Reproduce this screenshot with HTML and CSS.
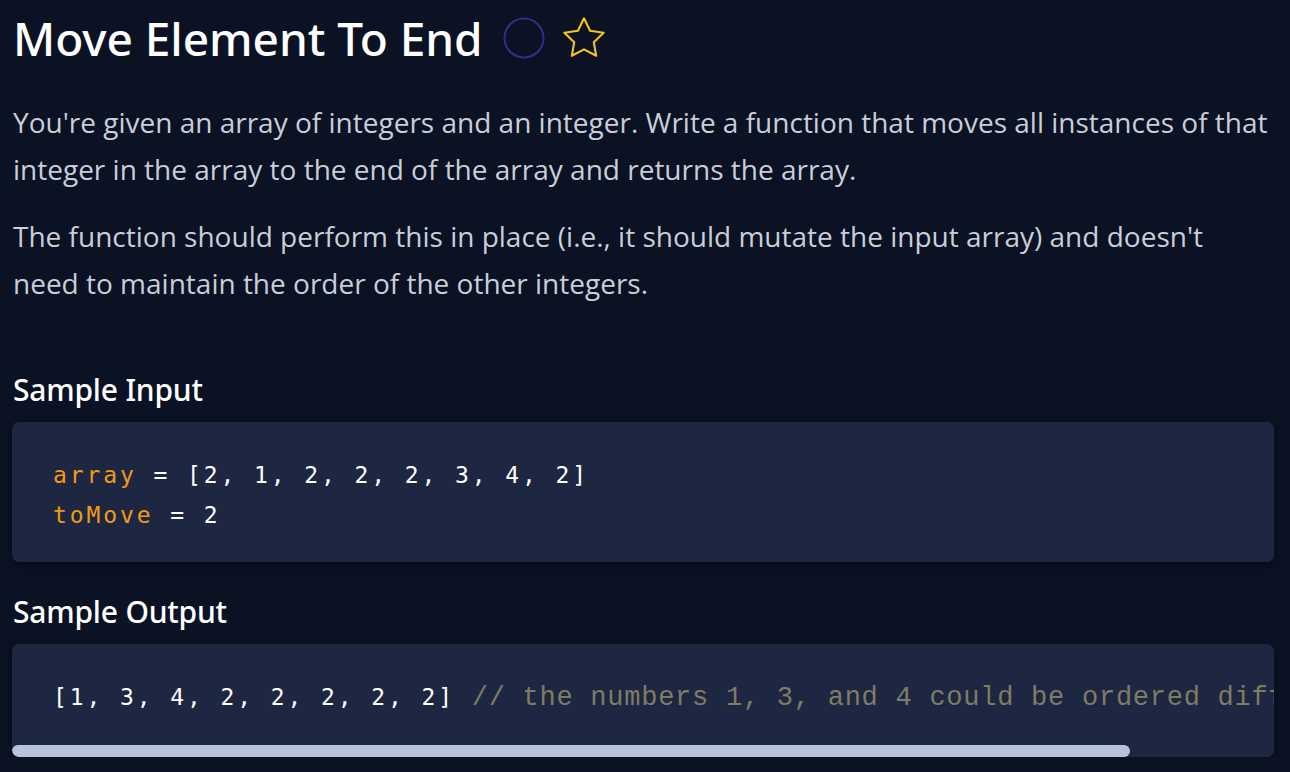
FILE: index.html
```html
<!DOCTYPE html>
<html lang="en">
<head>
<meta charset="utf-8">
<title>Move Element To End</title>
<link rel="stylesheet" href="styles.css">
</head>
<body>
<main class="prompt">
  <header class="title-row">
    <h1 class="title">Move Element To End</h1>
    <svg class="status-icon" width="42" height="42" viewBox="0 0 42 42" aria-hidden="true">
      <circle cx="21" cy="21" r="19.5" fill="none" stroke="#342e86" stroke-width="2"/>
    </svg>
    <svg class="star-icon" width="42" height="42" viewBox="2.5 2.2 19 19" aria-hidden="true">
      <path d="M12 2.8l2.75 5.6 6.15.9-4.45 4.33 1.05 6.12L12 16.87l-5.5 2.88 1.05-6.12L3.1 9.3l6.15-.9z" fill="none" stroke="#f6c21c" stroke-width="0.95" stroke-linejoin="round"/>
    </svg>
  </header>
  <p class="text">You're given an array of integers and an integer. Write a function that moves all instances of that integer in the array to the end of the array and returns the array.</p>
  <p class="text">The function should perform this in place (i.e., it should mutate the input array) and doesn't need to maintain the order of the other integers.</p>

  <h3 class="section-title section-title--first">Sample Input</h3>
  <pre class="code-block"><code><span class="var">array</span> = [2, 1, 2, 2, 2, 3, 4, 2]
<span class="var">toMove</span> = 2</code></pre>

  <h3 class="section-title">Sample Output</h3>
  <div class="code-block code-block--scroll">
    <pre class="code-line"><code>[1, 3, 4, 2, 2, 2, 2, 2] <span class="comment">// the numbers 1, 3, and 4 could be ordered differently</span></code></pre>
    <div class="scrollbar"><div class="scrollbar-thumb"></div></div>
  </div>
</main>
</body>
</html>
```
FILE: styles.css
```css
html, body {
  margin: 0;
  background: #0a1224;
}
body {
  padding: 0 16px 0 12px;
  font-family: "Open Sans", "Noto Sans", sans-serif;
  color: #c9ced8;
}
.prompt {
  display: flex;
  flex-direction: column;
}
.title-row {
  display: flex;
  align-items: center;
  gap: 0;
  height: 76px;
  padding-left: 1px;
}
.title {
  margin: 0;
  font-family: "Noto Sans", "Open Sans", sans-serif;
  font-weight: 500;
  font-size: 46px;
  line-height: 1;
  color: #ffffff;
  letter-spacing: -0.05px;
}
.status-icon {
  margin-left: 20px;
}
.star-icon {
  margin-left: 18px;
}
.text {
  margin: 23px 0 0 1px;
  font-size: 28px;
  line-height: 47px;
  color: #c9ced8;
}
.text + .text {
  margin-top: 20px;
}
.section-title {
  margin: 30px 0 0 1px;
  font-family: "Noto Sans", "Open Sans", sans-serif;
  font-weight: 500;
  font-size: 30px;
  line-height: 40px;
  color: #ffffff;
  letter-spacing: -0.2px;
}
.section-title--first {
  margin-top: 63px;
}
.code-block {
  margin: 12px 0 0 0;
  padding: 33px 41px 27px;
  background: #1d2742;
  border-radius: 7px;
  box-shadow: 0 3px 8px rgba(0, 0, 0, 0.45);
  font-family: "DejaVu Sans Mono", monospace;
  font-size: 23px;
  line-height: 40px;
  letter-spacing: 2.9px;
  color: #ffffff;
  white-space: pre;
}
.code-block code {
  font-family: inherit;
}
.var {
  color: #f39a12;
}
.code-block--scroll {
  padding: 0;
  overflow: hidden;
  display: flex;
  flex-direction: column;
}
.code-line {
  margin: 0;
  padding: 33px 41px 27px;
  font: inherit;
  letter-spacing: inherit;
  overflow: hidden;
}
.comment {
  font-family: "Liberation Mono", "Courier New", monospace;
  font-size: 27px;
  letter-spacing: 0.75px;
  color: #7f7c62;
}
.scrollbar {
  height: 12px;
}
.scrollbar-thumb {
  width: 1118px;
  height: 12px;
  border-radius: 6px;
  background: #b7c3da;
}
```
